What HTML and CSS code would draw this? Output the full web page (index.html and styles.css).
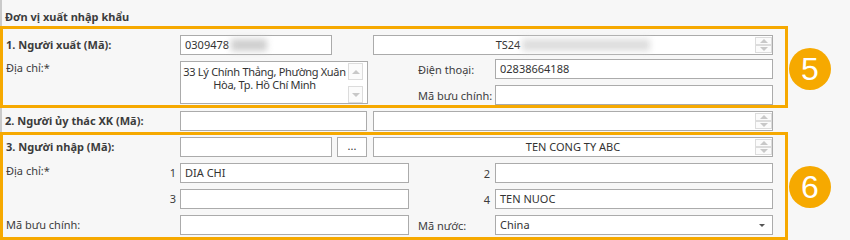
FILE: index.html
```html
<!DOCTYPE html>
<html lang="vi">
<head>
    <meta charset="UTF-8">
    <title>Đơn vị xuất nhập khẩu</title>
    <link rel="stylesheet" href="styles.css">
</head>
<body>
    <div class="form">
        <div class="title">Đơn vị xuất nhập khẩu</div>

        <!-- 1. Exporter -->
        <div class="group">
            <div class="box box-exporter">
                <div class="row">
                    <div class="lbl strong">1. Người xuất (Mã):</div>
                    <div class="field w152"><span>0309478</span><span class="blur blur-code"></span></div>
                    <div class="gap41"></div>
                    <div class="field w400 spin center"><span>TS24</span><span class="blur blur-name"></span>
                        <div class="spinner"><i class="up"></i><i class="down"></i></div>
                    </div>
                </div>
                <div class="row row-next">
                    <div class="lbl top">Địa chỉ:*</div>
                    <div class="field area">
                        <div class="area-text">33 Lý Chính Thẳng, Phường Xuân Hòa, Tp. Hồ Chí Minh</div>
                        <div class="scroll"><i class="up"></i><i class="down"></i></div>
                    </div>
                    <div class="side">
                        <div class="row">
                            <div class="lbl-mid">Điện thoại:</div>
                            <div class="field w278">02838664188</div>
                        </div>
                        <div class="row row-next">
                            <div class="lbl-mid">Mã bưu chính:</div>
                            <div class="field w278"></div>
                        </div>
                    </div>
                </div>
            </div>
            <div class="badge badge-5">5</div>
        </div>

        <!-- 2. Trustee -->
        <div class="row trustee">
            <div class="lbl strong">2. Người ủy thác XK (Mã):</div>
            <div class="field w187"></div>
            <div class="gap6"></div>
            <div class="field w400 spin">
                <div class="spinner"><i class="up"></i><i class="down"></i></div>
            </div>
        </div>

        <!-- 3. Importer -->
        <div class="group">
            <div class="box box-importer">
                <div class="row">
                    <div class="lbl strong">3. Người nhập (Mã):</div>
                    <div class="field w152"></div>
                    <div class="btn">...</div>
                    <div class="field w400 spin center">TEN CONG TY ABC
                        <div class="spinner"><i class="up"></i><i class="down"></i></div>
                    </div>
                </div>
                <div class="row row-next">
                    <div class="lbl split"><span class="top">Địa chỉ:*</span><span>1</span></div>
                    <div class="field w229">DIA CHI</div>
                    <div class="lbl-num">2</div>
                    <div class="field w278"></div>
                </div>
                <div class="row row-next">
                    <div class="lbl split"><span></span><span>3</span></div>
                    <div class="field w229"></div>
                    <div class="lbl-num">4</div>
                    <div class="field w278">TEN NUOC</div>
                </div>
                <div class="row row-next">
                    <div class="lbl">Mã bưu chính:</div>
                    <div class="field w229"></div>
                    <div class="lbl-mid">Mã nước:</div>
                    <div class="field w278 select">China<span class="caret"></span></div>
                </div>
            </div>
            <div class="badge badge-6">6</div>
        </div>
    </div>
</body>
</html>
```

FILE: styles.css
```css
body {
    margin: 0;
    background-color: #f7f7f7;
    font-family: "Noto Sans", "DejaVu Sans", sans-serif;
    font-size: 11px;
    color: #3c3c3c;
}

.form {
    width: 850px;
}

.title {
    height: 26px;
    box-sizing: border-box;
    padding: 8px 0 0 3px;
    line-height: 18px;
    font-weight: bold;
    border-left: 2px solid #cacaca;
}

.group {
    display: flex;
    align-items: center;
}

.box {
    width: 788px;
    box-sizing: border-box;
    border: 3px solid #f6a900;
    overflow: hidden;
}

.box-exporter {
    height: 82px;
    padding-top: 6px;
}

.box-importer {
    height: 108px;
    padding-top: 2px;
}

.row {
    display: flex;
    align-items: center;
}

.row-next {
    margin-top: 6px;
}

.box-exporter > .row-next {
    margin-top: 5px;
    align-items: flex-start;
}

.lbl {
    width: 177px;
    box-sizing: border-box;
    padding-left: 3px;
    line-height: 20px;
    white-space: nowrap;
}

.strong {
    font-weight: bold;
}

.lbl.top,
.lbl .top {
    align-self: flex-start;
    line-height: 15px;
}

.lbl.split {
    display: flex;
    justify-content: space-between;
    align-self: stretch;
    padding-right: 4px;
}

.lbl.split span:last-child {
    align-self: center;
}

.lbl-mid {
    width: 86px;
    box-sizing: border-box;
    padding-left: 9px;
    white-space: nowrap;
}

.lbl-num {
    width: 86px;
    box-sizing: border-box;
    padding-right: 5px;
    text-align: right;
}

.field {
    position: relative;
    height: 20px;
    box-sizing: border-box;
    padding: 0 4px;
    line-height: 18px;
    background-color: #fff;
    border: 1px solid #ababab;
    color: #333;
    white-space: nowrap;
    display: flex;
    align-items: center;
}

.center {
    justify-content: center;
}

.w152 { width: 152px; }
.w187 { width: 187px; }
.w229 { width: 229px; }
.w278 { width: 278px; }
.w400 { width: 400px; }

.gap41 { width: 41px; }
.gap6 { width: 6px; }

.blur {
    display: inline-block;
    height: 12px;
    background-color: #cfcfcf;
    filter: blur(3px);
    margin-left: 2px;
}

.blur-code { width: 36px; }
.blur-name { width: 128px; background-color: #dedede; }

.spinner {
    position: absolute;
    top: 1px;
    right: 0;
    width: 17px;
    display: flex;
    flex-direction: column;
}

.spinner i,
.scroll i {
    display: block;
    position: relative;
    box-sizing: border-box;
    border: 1px solid #dcdcdc;
    background-color: #fbfbfb;
}

.spinner i {
    height: 8px;
}

.spinner i::after,
.scroll i::after {
    content: "";
    position: absolute;
    left: 50%;
    top: 50%;
    margin-left: -4px;
    border-left: 4px solid transparent;
    border-right: 4px solid transparent;
}

.spinner i.up::after,
.scroll i.up::after {
    margin-top: -2px;
    border-bottom: 4px solid #c8c8c8;
}

.spinner i.down::after,
.scroll i.down::after {
    margin-top: -2px;
    border-top: 4px solid #c8c8c8;
}

.area {
    width: 188px;
    height: 43px;
    margin-top: 1px;
    padding: 0;
    align-items: stretch;
}

.area-text {
    flex: 1;
    padding: 3px 0 0;
    line-height: 13px;
    letter-spacing: -0.3px;
    text-align: center;
    white-space: normal;
}

.scroll {
    width: 18px;
    display: flex;
    flex-direction: column;
    justify-content: space-between;
    padding: 1px 1px 0 0;
}

.scroll i {
    height: 17px;
    width: 15px;
}

.side {
    margin-left: 41px;
    margin-top: -1px;
}

.trustee {
    height: 24px;
    box-sizing: border-box;
    padding-top: 3px;
    align-items: flex-start;
    border-left: 2px solid #cacaca;
}

.trustee .lbl {
    padding-left: 3px;
    width: 178px;
    line-height: 20px;
}

.btn {
    width: 30px;
    height: 20px;
    box-sizing: border-box;
    margin: 0 6px 0 5px;
    border: 1px solid #ababab;
    background-color: #fff;
    text-align: center;
    line-height: 16px;
    color: #333;
}

.select .caret {
    position: absolute;
    right: 7px;
    top: 8px;
    border-left: 3px solid transparent;
    border-right: 3px solid transparent;
    border-top: 3px solid #555;
}

.badge {
    width: 42px;
    height: 42px;
    margin-left: 1px;
    border-radius: 50%;
    background-color: #f6a900;
    color: #fff;
    font-family: "Liberation Sans", sans-serif;
    font-size: 32px;
    line-height: 42px;
    text-align: center;
}

.badge-5 {
    margin-top: 4px;
}

.badge-6 {
    margin-top: 2px;
}
```
